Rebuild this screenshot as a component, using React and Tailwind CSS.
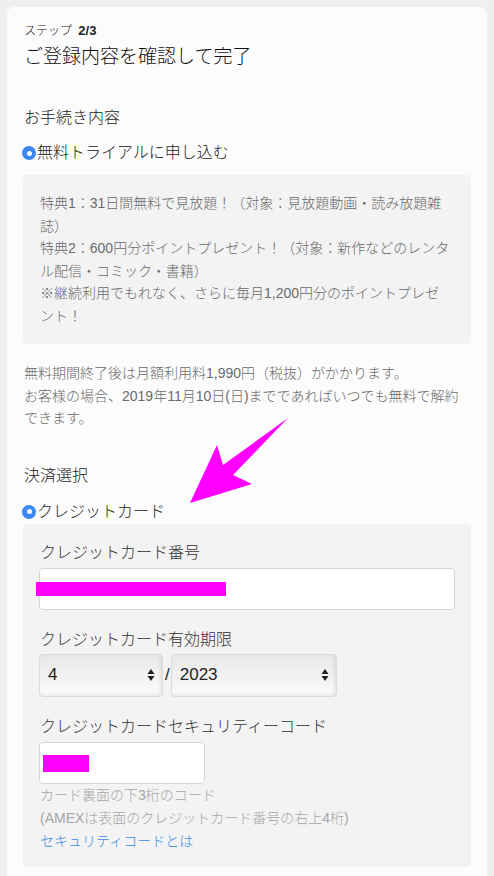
import React from "react";

const font = { fontFamily: '"Liberation Sans", "Noto Sans CJK JP", sans-serif' };

const Radio = ({ label }) => (
  <div className="flex items-center h-6 text-[16px] text-[#222]">
    <span className="w-[14px] h-[14px] rounded-full bg-[#3d87f5] flex items-center justify-center mr-px -ml-[1px]">
      <span className="w-[5px] h-[5px] rounded-full bg-white" />
    </span>
    <span>{label}</span>
  </div>
);

const Stepper = () => (
  <svg width="8" height="14" viewBox="0 0 8 14" className="shrink-0">
    <path d="M4 1 L7.5 6 L0.5 6 Z" fill="#222" />
    <path d="M4 13 L7.5 8 L0.5 8 Z" fill="#222" />
  </svg>
);

const SelectBox = ({ value, width }) => (
  <div
    className={`${width} h-[43px] rounded-[4px] border border-[#dadada] bg-gradient-to-b from-[#e8e8e8] to-[#fbfbfb] shadow-[inset_-2px_-2px_3px_rgba(0,0,0,0.07)] flex items-center justify-between pl-[8px] pr-[7px] text-[17px] font-normal text-[#222]`}
  >
    <span>{value}</span>
    <Stepper />
  </div>
);

const boxLines = [
  "特典1：31日間無料で見放題！（対象：見放題動画・読み放題雑",
  "誌）",
  "特典2：600円分ポイントプレゼント！（対象：新作などのレンタ",
  "ル配信・コミック・書籍）",
  "※継続利用でもれなく、さらに毎月1,200円分のポイントプレゼ",
  "ント！",
];

const noticeLines = [
  "無料期間終了後は月額利用料1,990円（税抜）がかかります。",
  "お客様の場合、2019年11月10日(日)までであればいつでも無料で解約",
  "できます。",
];

export default function App() {
  return (
    <div className="relative min-h-[876px] bg-[#efefef] pt-[7px] px-[7px] overflow-hidden font-light" style={font}>
      <div className="rounded-[7px] bg-[#fcfcfc] px-4 pt-4 pb-8">
        {/* Header */}
        <div className="pl-px text-[12px] leading-4 text-[#222]">
          ステップ <span className="font-bold text-[13px] ml-[3px]">2/3</span>
        </div>
        <h1 className="pl-px mt-[5px] text-[19px] leading-[26px] text-[#111]">ご登録内容を確認して完了</h1>

        {/* Plan */}
        <h2 className="pl-px mt-[36px] text-[16px] leading-6 text-[#222]">お手続き内容</h2>
        <div className="mt-[11px]">
          <Radio label="無料トライアルに申し込む" />
        </div>
        <div className="mt-[10px] rounded-[4px] bg-[#f3f3f3] px-[17px] py-[17px] text-[14px] leading-[22.5px] text-[#6a6a6a]">
          {boxLines.map((l) => (
            <div key={l} className="whitespace-nowrap">{l}</div>
          ))}
        </div>

        <div className="pl-px mt-[18px] text-[14px] leading-[22.5px] text-[#6a6a6a]">
          {noticeLines.map((l) => (
            <div key={l} className="whitespace-nowrap">{l}</div>
          ))}
        </div>

        {/* Payment */}
        <h2 className="pl-px mt-[34px] text-[16px] leading-6 text-[#222]">決済選択</h2>
        <div className="mt-[12px]">
          <Radio label="クレジットカード" />
        </div>
        <div className="rounded-[4px] bg-[#f3f3f3] px-4 pt-[17px] pb-[14px]">
          <div className="pl-px text-[16px] leading-6 text-[#333]">クレジットカード番号</div>
          <div className="relative mt-[3px] h-[42px] rounded-[4px] border border-[#d6d6d6] bg-white">
            <div className="absolute -left-[4px] top-[13px] w-[190px] h-[14px] bg-[#ff00ff]" />
          </div>

          <div className="pl-px mt-[18px] text-[16px] leading-6 text-[#333]">クレジットカード有効期限</div>
          <div className="mt-[2px] flex items-center">
            <SelectBox value="4" width="w-[124px]" />
            <span className="ml-[2px] mr-[1px] text-[17px] text-[#222]">/</span>
            <SelectBox value="2023" width="w-[166px]" />
          </div>

          <div className="pl-px mt-[18px] text-[16px] leading-6 text-[#333]">クレジットカードセキュリティーコード</div>
          <div className="relative mt-[3px] w-[166px] h-[42px] rounded-[4px] border border-[#d6d6d6] bg-white">
            <div className="absolute left-[3px] top-[12px] w-[46px] h-[17px] bg-[#ff00ff]" />
          </div>
          <div className="pl-px text-[14px] leading-[23px] text-[#a6a6a6]">
            <div>カード裏面の下3桁のコード</div>
            <div>(AMEXは表面のクレジットカード番号の右上4桁)</div>
            <div className="text-[#3a8ee6]">セキュリティコードとは</div>
          </div>
        </div>
      </div>

      {/* Annotation arrow */}
      <svg className="absolute left-[185px] top-[413px]" width="110" height="95" viewBox="0 0 110 95">
        <polygon points="103,5 48,62 67,71 5,90 32,32 38,52" fill="#ff00ff" />
      </svg>
    </div>
  );
}
